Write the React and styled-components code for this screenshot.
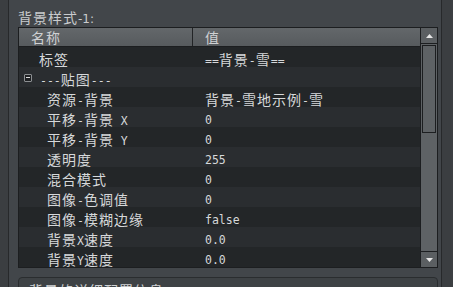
import React from 'react';
import styled, { createGlobalStyle } from 'styled-components';

const GlobalStyle = createGlobalStyle`
  html, body {
    margin: 0;
    padding: 0;
    background: #3c3f42;
    overflow: hidden;
  }
`;

// indent = padding inside the name cell
const rows = [
  { name: '标签', value: '==背景-雪==', indent: 20 },
  { name: '---贴图---', value: '', indent: 21, group: true },
  { name: '资源-背景', value: '背景-雪地示例-雪', indent: 28 },
  { name: '平移-背景 X', value: '0', indent: 28 },
  { name: '平移-背景 Y', value: '0', indent: 28 },
  { name: '透明度', value: '255', indent: 28 },
  { name: '混合模式', value: '0', indent: 28 },
  { name: '图像-色调值', value: '0', indent: 28 },
  { name: '图像-模糊边缘', value: 'false', indent: 28 },
  { name: '背景X速度', value: '0.0', indent: 28 },
  { name: '背景Y速度', value: '0.0', indent: 28 },
];

// split a label into CJK runs and latin runs, the app renders them with different fonts
const splitRuns = (str) => {
  const out = [];
  const re = /[\u3000-\u9fff\uff00-\uffef]+/g;
  let last = 0;
  let m;
  while ((m = re.exec(str))) {
    if (m.index > last) out.push({ cjk: false, text: str.slice(last, m.index) });
    out.push({ cjk: true, text: m[0] });
    last = m.index + m[0].length;
  }
  if (last < str.length) out.push({ cjk: false, text: str.slice(last) });
  return out;
};

const Label = ({ text, sans }) => (
  <>
    {splitRuns(text).map((r, i) =>
      r.cjk ? <Cjk key={i}>{r.text}</Cjk> : <Latin key={i} $sans={sans}>{r.text}</Latin>
    )}
  </>
);

const App = () => (
  <>
    <GlobalStyle />
    <Screen>
      <SideStrip />
      <Panel>
        <Title>
          <Label text="背景样式-1:" sans />
        </Title>
        <Table>
          <TableBody>
            <HeaderRow>
              <HeaderCell $w={174} $pad={12}>
                <Label text="名称" />
              </HeaderCell>
              <HeaderCell $pad={12}>
                <Label text="值" />
              </HeaderCell>
            </HeaderRow>
            {rows.map((r, i) => (
              <Row key={i} $alt={i % 2 === 1}>
                <NameCell $pad={r.indent}>
                  {r.group && <Collapse />}
                  <Label text={r.name} />
                </NameCell>
                <ValueCell>
                  <Label text={r.value} />
                </ValueCell>
              </Row>
            ))}
          </TableBody>
          <ScrollBar>
            <ArrowButton>
              <Arrow viewBox="0 0 7 4">
                <path d="M0 4 L3.5 0 L7 4 Z" fill="#e8e8e8" />
              </Arrow>
            </ArrowButton>
            <Track>
              <Thumb />
            </Track>
            <ArrowButton $bottom>
              <Arrow viewBox="0 0 7 4">
                <path d="M0 0 L3.5 4 L7 0 Z" fill="#e8e8e8" />
              </Arrow>
            </ArrowButton>
          </ScrollBar>
        </Table>
        <DetailBox>
          <Label text="背景的详细配置信息" />
        </DetailBox>
      </Panel>
      <SideStrip $right />
    </Screen>
  </>
);

const Screen = styled.div`
  display: flex;
  width: 453px;
  height: 287px;
  overflow: hidden;
  background: #3c3f42;
`;

const SideStrip = styled.div`
  width: ${({ $right }) => ($right ? '9px' : '8px')};
  flex-shrink: 0;
  background: #3b3e41;
`;

const Panel = styled.div`
  width: 434px;
  flex-shrink: 0;
  box-sizing: border-box;
  border-left: 1px solid #27292b;
  border-right: 1px solid #27292b;
  background: #42464a;
  padding: 7px 0 0 9px;
  display: flex;
  flex-direction: column;
`;

const Cjk = styled.span`
  font-family: 'Noto Sans CJK SC', sans-serif;
  font-size: 14px;
  letter-spacing: 1px;
`;

const Latin = styled.span`
  font-family: ${({ $sans }) => ($sans ? "'DejaVu Sans'" : "'DejaVu Sans Mono'")}, monospace;
  font-size: ${({ $sans }) => ($sans ? '12px' : '11.5px')};
`;

const Title = styled.div`
  height: 20px;
  line-height: 20px;
  color: #c9cbcd;
  white-space: nowrap;
`;

const Table = styled.div`
  width: 420px;
  height: 241px;
  box-sizing: border-box;
  border: 1px solid #1c1e20;
  display: flex;
  background: #232628;
`;

const TableBody = styled.div`
  flex: 1;
  display: flex;
  flex-direction: column;
`;

const HeaderRow = styled.div`
  display: flex;
  height: 19px;
  box-sizing: border-box;
  border-bottom: 1px solid #1c1e20;
  background: linear-gradient(#63676a, #575b5e);
`;

const HeaderCell = styled.div`
  width: ${({ $w }) => ($w ? `${$w}px` : 'auto')};
  flex: ${({ $w }) => ($w ? 'none' : '1')};
  box-sizing: border-box;
  padding-left: ${({ $pad }) => $pad}px;
  border-right: ${({ $w }) => ($w ? '1px solid #222426' : 'none')};
  line-height: 18px;
  color: #cfd1d3;
  white-space: nowrap;
`;

const Row = styled.div`
  display: flex;
  height: 20px;
  background: ${({ $alt }) => ($alt ? '#2a2d30' : '#232628')};
  color: #d6d8da;
`;

const NameCell = styled.div`
  width: 174px;
  flex-shrink: 0;
  box-sizing: border-box;
  padding-left: ${({ $pad }) => $pad}px;
  padding-top: 2px;
  line-height: 20px;
  white-space: nowrap;
  position: relative;
`;

const ValueCell = styled.div`
  flex: 1;
  padding-left: 12px;
  padding-top: 2px;
  line-height: 20px;
  white-space: nowrap;
`;

const Collapse = styled.span`
  position: absolute;
  left: 5px;
  top: 7px;
  width: 8px;
  height: 8px;
  box-sizing: border-box;
  border: 1px solid #8c8f92;
  border-radius: 1px;
  background: #1e2022;

  &::after {
    content: '';
    position: absolute;
    left: 1px;
    right: 1px;
    top: 2px;
    height: 1px;
    background: #e0e0e0;
  }
`;

const ScrollBar = styled.div`
  width: 17px;
  flex-shrink: 0;
  box-sizing: border-box;
  border-left: 1px solid #1c1e20;
  display: flex;
  flex-direction: column;
  background: #5e6265;
`;

const ArrowButton = styled.div`
  height: 16px;
  flex-shrink: 0;
  box-sizing: border-box;
  display: flex;
  align-items: center;
  justify-content: center;
  background: #5b5f62;
  ${({ $bottom }) => ($bottom ? 'border-top: 1px solid #1c1e20;' : 'border-bottom: 1px solid #1c1e20;')}
`;

const Arrow = styled.svg`
  width: 7px;
  height: 4px;
`;

const Track = styled.div`
  flex: 1;
  padding: 1px 1px 0 1px;
  background: #5e6265;
`;

const Thumb = styled.div`
  height: 88px;
  box-sizing: border-box;
  border: 1px solid #1c1e20;
  background: #5e6265;
`;

const DetailBox = styled.div`
  margin-top: 9px;
  width: 420px;
  height: 30px;
  box-sizing: border-box;
  border: 1px solid #2a2d2f;
  border-radius: 4px;
  background: #3e4245;
  padding: 2px 0 0 10px;
  line-height: 20px;
  color: #d0d2d4;
  white-space: nowrap;
`;

export default App;
